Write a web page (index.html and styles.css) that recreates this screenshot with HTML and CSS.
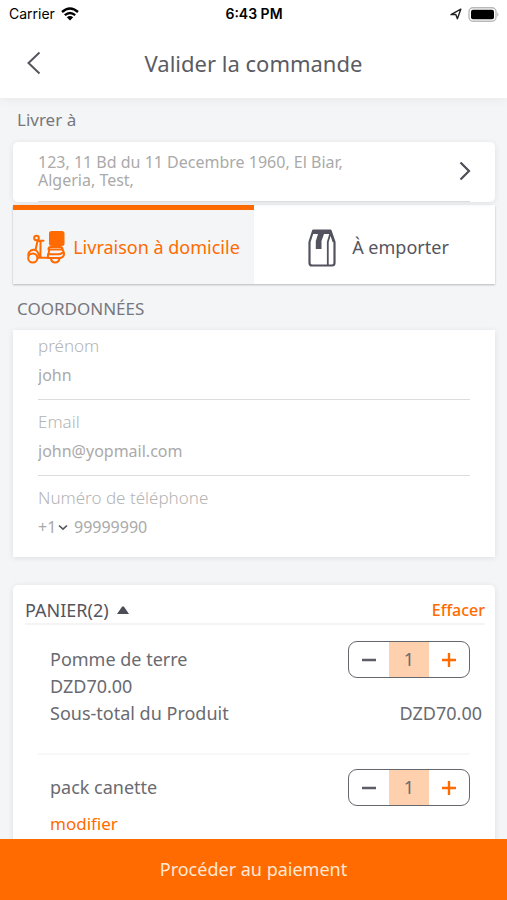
FILE: index.html
```html
<!DOCTYPE html>
<html lang="fr">
<head>
<meta charset="utf-8">
<meta name="viewport" content="width=device-width, initial-scale=1">
<title>Valider la commande</title>
<link rel="stylesheet" href="styles.css">
</head>
<body>
<header class="top">
  <div class="status">
    <div class="carrier">
      <span>Carrier</span>
      <svg width="18" height="14" viewBox="0 0 18 14" aria-hidden="true"><g fill="none" stroke="#000" stroke-width="2.4"><path d="M1 5Q9-2 17 5"/><path d="M3.8 8.2Q9 3.6 14.2 8.2"/></g><path d="M5.8 10.2Q9 7.6 12.2 10.2L9 13.6Z"/></svg>
    </div>
    <span class="clock">6:43 PM</span>
    <div class="battery">
      <svg width="12" height="12" viewBox="0 0 12 12" aria-hidden="true"><path d="M1 6.6 10.8 1.2 7.4 10.8 5.8 6.4Z" fill="none" stroke="#222" stroke-width="1.4" stroke-linejoin="round"/></svg>
      <svg width="31" height="15" viewBox="0 0 31 15" aria-hidden="true"><rect x="1" y=".8" width="27" height="13.4" rx="4" fill="#fff" stroke="#b9b9b9" stroke-width="1.4"/><rect x="3" y="2.8" width="23" height="9.4" rx="2" fill="#000"/><path d="M29.4 5.2q2 2.3 0 4.6z" fill="#aaa"/></svg>
    </div>
  </div>
  <div class="nav">
    <button class="back" type="button" aria-label="Retour"><svg width="14" height="24" viewBox="0 0 14 24"><path d="M12.500 1.500 1.500 12 12.500 22.500" fill="none" stroke="#55555f" stroke-width="2"/></svg></button>
    <h1 class="title">Valider la commande</h1>
  </div>
</header>

<main class="content">
  <h2 class="section">Livrer à</h2>
  <button class="card address" type="button">
    <span class="address-text">123, 11 Bd du 11 Decembre 1960, El Biar, Algeria, Test,</span>
    <svg width="12" height="20" viewBox="0 0 12 20" aria-hidden="true"><path d="M1.500 1.500 10 10 1.500 18.500" fill="none" stroke="#4d4d57" stroke-width="2.200"/></svg>
  </button>

  <div class="tabs">
    <button class="tab active" type="button">
      <svg width="38" height="34" viewBox="0 0 38 34" aria-hidden="true">
        <rect x="22" y="1" width="15.500" height="15" rx="2.500" fill="#ff6b00"/>
        <g fill="none" stroke="#ff6b00" stroke-width="2" stroke-linecap="round" stroke-linejoin="round">
          <circle cx="5.800" cy="28" r="4.600"/>
          <path d="M1.200 25C2 20.500 5.500 19 8.500 20L10.500 11H13.500V21Q13 25 14 27.800H21"/>
          <path d="M10.500 10.800H16.500"/>
          <circle cx="9.500" cy="8" r="2.300"/>
          <path d="M8.500 20Q12 22 12.500 27.800H10.600"/>
          <path d="M21.500 19.500Q21.500 17 23.500 17H33.500Q35.500 17 35.500 19.500Z"/>
          <path d="M22 19.500Q22.500 22 21 24.500V28H33.500Q37 27 37 24Q37 22 35.500 19.500"/>
          <path d="M22 24.200H31.500Q34 24.200 36 22.500M23.800 28Q24.500 32.500 28.200 32.500T32.600 28"/>
        </g>
      </svg>
      <span>Livraison à domicile</span>
    </button>
    <button class="tab takeaway" type="button">
      <svg width="28" height="38" viewBox="0 0 28 38" aria-hidden="true">
        <path d="M5.200 1.500H22.500L26.500 13V34Q26.500 36.500 24 36.500H4Q1.500 36.500 1.500 34V13Z" fill="#fff" stroke="#53535f" stroke-width="2.200" stroke-linejoin="round"/>
        <path d="M5 1H23V5H16L13.500 12V20H7.800V12L10 5H4Z" fill="#53535f"/>
        <path d="M22.500 4 19.800 13V36M22.500 4 25.500 13" fill="none" stroke="#53535f" stroke-width="1.800"/>
      </svg>
      <span>À emporter</span>
    </button>
  </div>

  <h2 class="section">COORDONNÉES</h2>
  <form class="card details">
    <div class="field">
      <label for="name">prénom</label>
      <input id="name" type="text" value="john">
    </div>
    <div class="field">
      <label for="email">Email</label>
      <input id="email" type="email" value="john@yopmail.com">
    </div>
    <div class="field">
      <label for="phone">Numéro de téléphone</label>
      <div class="phone">
        <select aria-label="Indicatif"><option>+1</option></select>
        <svg width="10" height="7" viewBox="0 0 10 7" aria-hidden="true"><path d="M1 1.500 5 5.200 9 1.500" fill="none" stroke="#555" stroke-width="1.600"/></svg>
        <input id="phone" type="tel" value="99999990">
      </div>
    </div>
  </form>

  <section class="card basket">
    <div class="basket-head">
      <button class="toggle" type="button"><span>PANIER(2)</span><svg width="12" height="8" viewBox="0 0 12 8" aria-hidden="true"><path d="M0 8 5 .800Q6-.400 7 .800L12 8Z" fill="#4d4d57"/></svg></button>
      <button class="clear" type="button">Effacer</button>
    </div>
    <article class="item">
      <div class="row">
        <div class="name"><div>Pomme de terre</div><div>DZD70.00</div></div>
        <div class="stepper">
          <button type="button" aria-label="Retirer"><svg width="16" height="16" viewBox="0 0 16 16"><path d="M1 8H15" stroke="#5d5d66" stroke-width="2.400"/></svg></button>
          <output>1</output>
          <button type="button" aria-label="Ajouter"><svg width="16" height="16" viewBox="0 0 16 16"><path d="M1 8H15M8 1V15" stroke="#ff6b00" stroke-width="2.400"/></svg></button>
        </div>
      </div>
      <div class="subtotal"><span>Sous-total du Produit</span><span>DZD70.00</span></div>
    </article>
    <article class="item">
      <div class="row">
        <div class="name"><div>pack canette</div><a class="edit" href="#">modifier</a></div>
        <div class="stepper">
          <button type="button" aria-label="Retirer"><svg width="16" height="16" viewBox="0 0 16 16"><path d="M1 8H15" stroke="#5d5d66" stroke-width="2.400"/></svg></button>
          <output>1</output>
          <button type="button" aria-label="Ajouter"><svg width="16" height="16" viewBox="0 0 16 16"><path d="M1 8H15M8 1V15" stroke="#ff6b00" stroke-width="2.400"/></svg></button>
        </div>
      </div>
    </article>
  </section>
</main>

<button class="pay" type="button">Procéder au paiement</button>
</body>
</html>
```
FILE: styles.css
```css
* { box-sizing: border-box; }
body {
  margin: 0;
  height: 100vh;
  display: flex;
  flex-direction: column;
  background: #f3f5f7;
  color: #6a6a71;
  font: 18px/27px "Noto Sans", sans-serif;
}
button, input, select {
  margin: 0;
  padding: 0;
  border: 0;
  background: none;
  color: inherit;
  font: inherit;
}
svg { display: block; flex: none; }

.top {
  flex: none;
  background: #fff;
  box-shadow: 0 2px 10px rgba(0, 0, 0, .05);
}
.status {
  display: grid;
  grid-template-columns: 1fr auto 1fr;
  align-items: center;
  height: 28px;
  padding: 0 8px 0 9px;
  color: #000;
  font: 14px/20px Inter, sans-serif;
}
.carrier, .battery { display: flex; align-items: center; gap: 6px; }
.battery { justify-content: flex-end; }
.clock { font-weight: 600; }
.nav {
  display: grid;
  grid-template-columns: 68px 1fr 68px;
  align-items: center;
  height: 70px;
}
.back { display: flex; justify-content: center; padding: 8px 0; }
.title {
  margin: 0;
  text-align: center;
  font-size: 22px;
  font-weight: 400;
  color: #5b5b63;
}

.content {
  flex: 1;
  min-height: 0;
  overflow-y: auto;
  scrollbar-width: none;
  padding: 0 12px 0 13px;
}
.section {
  margin: 0;
  padding: 8px 4px 9px;
  font-size: 17px;
  font-weight: 400;
  color: #77777d;
}
.card {
  background: #fff;
  box-shadow: 0 1px 6px rgba(0, 0, 0, .09);
}
.address {
  display: flex;
  justify-content: space-between;
  align-items: center;
  width: 100%;
  height: 60px;
  padding: 0 24px 2px 25px;
  border-radius: 5px;
  text-align: left;
  color: #aaa;
  font-size: 16px;
  line-height: 18px;
  position: relative;
}
.address::after {
  content: "";
  position: absolute;
  right: 25px;
  bottom: 0;
  left: 25px;
  height: 1px;
  background: #ddd;
}
.address-text { max-width: 340px; }
.tabs {
  display: grid;
  grid-template-columns: 1fr 1fr;
  margin-top: 3px;
  background: #fff;
  box-shadow: 0 1px 2px rgba(0, 0, 0, .25);
}
.tab {
  display: flex;
  align-items: center;
  justify-content: center;
  gap: 16px;
  height: 79px;
  padding-top: 6px;
  color: #55555d;
}
.tab.takeaway { padding-left: 8px; }
.tab.active {
  gap: 8px;
  padding-top: 0;
  border-top: 5px solid #ff6b00;
  background: #f3f5f7;
  color: #ff6b00;
}
.tabs + .section { padding-top: 11px; padding-bottom: 8px; }

.details { padding: 0 25px 6px; }
.field {
  padding: 1px 0 9px;
  border-bottom: 1px solid #ddd;
  color: #aaa;
  font-size: 16px;
}
.field label { display: block; line-height: 29px; color: #b4b4b4; font-weight: 300; font-size: 17px; }
.field input { display: block; width: 100%; height: 30px; line-height: 30px; padding: 0; }
.field + .field { padding-top: 7px; }
.field:last-child { border-bottom: 0; }
.phone { display: flex; align-items: center; }
.phone select { width: 20px; height: 30px; appearance: none; }
.phone input { flex: 1; min-width: 0; margin-left: 6px; }

.basket { margin-top: 28px; padding-bottom: 24px; border-radius: 5px; }
.basket-head {
  display: flex;
  justify-content: space-between;
  align-items: center;
  height: 40px;
  margin: 0 10px 0 12px;
  padding-top: 12px;
  border-bottom: 2px solid #f4f4f5;
}
.toggle { display: flex; align-items: center; gap: 8px; color: #55555d; }
.clear { color: #ff6b00; font-size: 16px; font-weight: 500; }
.item { margin: 0 25px; padding: 16px 0 0 12px; }
.item + .item { border-top: 2px solid #f8f8f9; margin-top: 26px; padding-top: 14px; }
.row { display: flex; justify-content: space-between; align-items: flex-start; }
.name { padding-top: 5px; }
.stepper {
  display: grid;
  grid-template-columns: repeat(3, 1fr);
  width: 122px;
  height: 37px;
  border: 1px solid #66666d;
  border-radius: 9px;
  overflow: hidden;
}
.stepper button { display: grid; place-items: center; }
.stepper output { display: grid; place-items: center; background: #ffd0ad; }
.subtotal { display: flex; justify-content: space-between; margin-right: -12px; }
.edit { display: block; margin-top: 9px; color: #ff6b00; font-size: 17px; text-decoration: none; }
.pay {
  flex: none;
  height: 61px;
  background: #ff6b00;
  color: #ffe8d4;
}
```
